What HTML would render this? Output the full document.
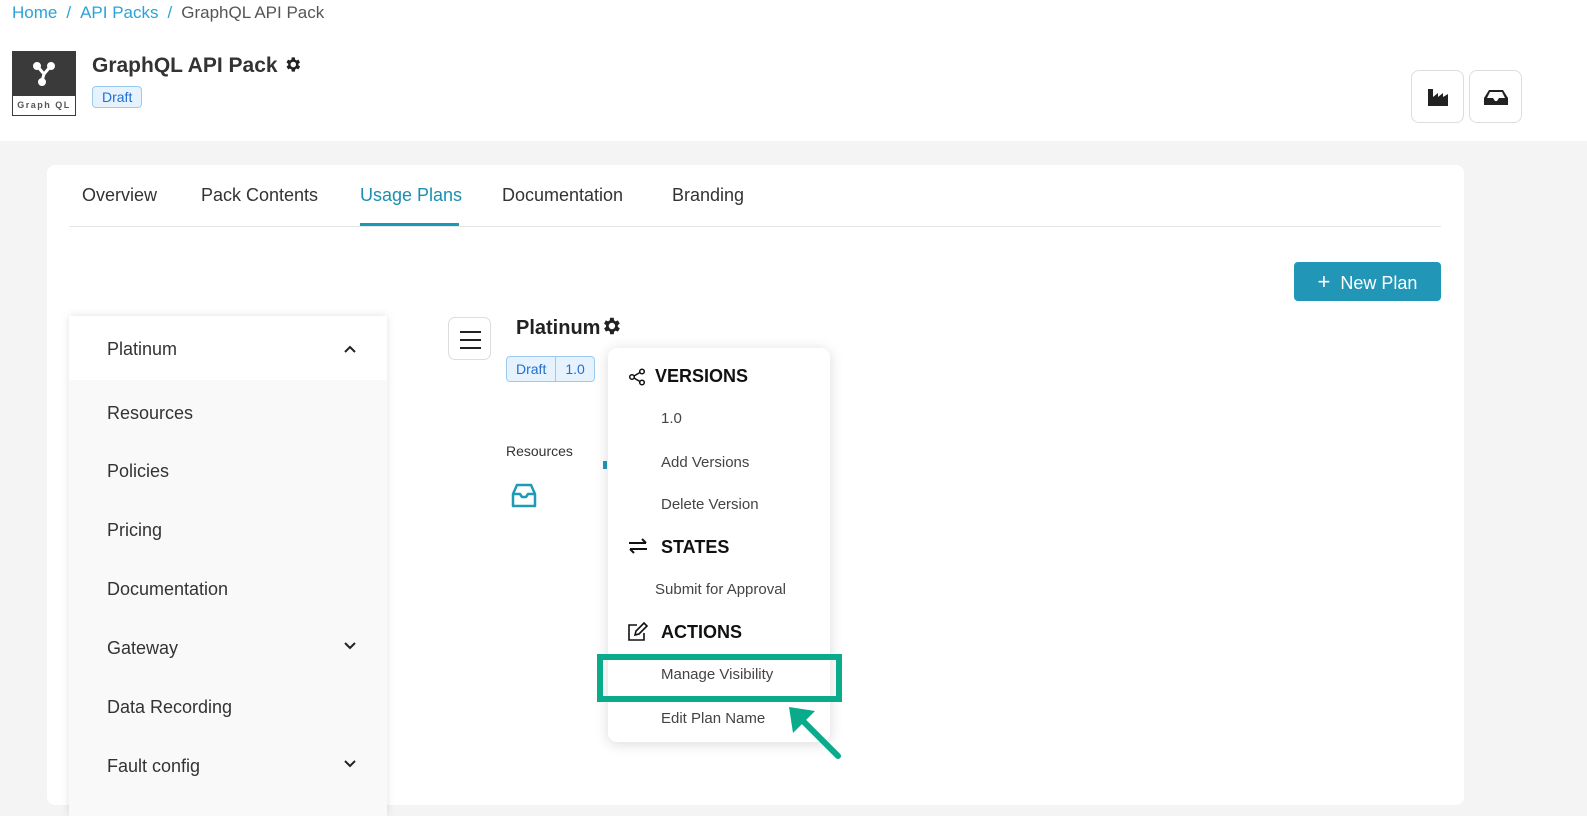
<!DOCTYPE html>
<html><head><meta charset="utf-8"><style>
*{box-sizing:border-box;margin:0;padding:0}
body{width:1587px;height:793px;overflow:hidden;background:#f4f4f4;font-family:"Liberation Sans",sans-serif;color:#333;position:relative}
.abs{position:absolute}
.top{left:0;top:0;width:1587px;height:141px;background:#fff}
.bc{left:12px;top:3px;font-size:17px;color:#555}
.bc a{color:#2aa3d8;text-decoration:none}
.bc span{margin:0 9px;color:#2aa3d8}
.logo{left:12px;top:51px;width:64px;height:65px;background:#3a3a3a}
.logo .lb{position:absolute;left:1px;right:1px;bottom:1px;height:19px;background:#fff;font-size:9px;letter-spacing:1.5px;color:#555;text-align:center;line-height:19px;font-weight:bold}
.title{left:92px;top:54px;font-size:21px;font-weight:bold;color:#333}
.badge{background:#e6f3ff;border:1px solid #9cc9f0;color:#1f6fd0;border-radius:4px;font-size:14px;padding:2px 9px}
.ib{width:53px;height:53px;border:1px solid #ddd;border-radius:8px;background:#fff;display:flex;align-items:center;justify-content:center}
.card{left:47px;top:165px;width:1417px;height:640px;background:#fff;border-radius:8px}
.tab{top:185px;font-size:18px;color:#333}
.line{left:69px;top:226px;width:1372px;height:1px;background:#e6e6e6}
.btn{left:1294px;top:262px;width:147px;height:39px;background:#2196b6;border-radius:4px;color:#fff;font-size:18px;line-height:39px;text-align:center}
.side{left:69px;top:316px;width:318px;height:500px;background:#f9f9f9;box-shadow:0 0 8px rgba(0,0,0,.12)}
.si{position:absolute;left:38px;font-size:18px;color:#333}
.menu{left:608px;top:348px;width:222px;height:394px;background:#fff;border-radius:9px;box-shadow:0 2px 14px rgba(0,0,0,.15)}
.mh{position:absolute;font-size:18px;font-weight:bold;color:#111}
.mi{position:absolute;font-size:15px;color:#444}
</style></head><body>
<div class="abs top"></div>
<div class="abs bc"><a>Home</a><span>/</span><a>API Packs</a><span>/</span>GraphQL API Pack</div>
<div class="abs logo"><svg width="64" height="44" viewBox="0 0 64 44"><g stroke="#fff" stroke-width="3" fill="#fff"><line x1="32" y1="23" x2="26" y2="16"/><line x1="32" y1="23" x2="38" y2="16"/><line x1="32" y1="23" x2="30" y2="30"/><circle cx="25" cy="15" r="2.5"/><circle cx="39" cy="15" r="2.5"/><circle cx="30" cy="31" r="2.5"/></g></svg><div class="lb">Graph QL</div></div>
<div class="abs title">GraphQL API Pack <svg width="19" height="19" viewBox="0 0 24 24" style="vertical-align:-2px"><path fill="#222" d="M19.4 13a7.5 7.5 0 000-2l2.1-1.6-2-3.5-2.5 1a7 7 0 00-1.7-1L15 3h-4l-.4 2.9a7 7 0 00-1.7 1l-2.5-1-2 3.5L6.6 11a7.5 7.5 0 000 2l-2.1 1.6 2 3.5 2.5-1a7 7 0 001.7 1L11 21h4l.4-2.9a7 7 0 001.7-1l2.5 1 2-3.5zM13 15.5a3.5 3.5 0 110-7 3.5 3.5 0 010 7z"/></svg></div>
<div class="abs badge" style="left:92px;top:86px">Draft</div>
<div class="abs ib" style="left:1411px;top:70px"><svg width="22" height="20" viewBox="0 0 22 20"><path fill="#222" d="M1 2h5v8l5-4v4l5-4v4l5-3v12H1z"/></svg></div>
<div class="abs ib" style="left:1469px;top:70px"><svg width="26" height="20" viewBox="0 0 26 20"><path fill="#222" d="M6 3h14l5 8v7H1v-7zM7 5l-3 6h6l2 3h2l2-3h6l-3-6z"/></svg></div>
<div class="abs card"></div>
<div class="abs tab" style="left:82px">Overview</div>
<div class="abs tab" style="left:201px">Pack Contents</div>
<div class="abs tab" style="left:360px;color:#1a8fb0">Usage Plans</div>
<div class="abs" style="left:360px;top:223px;width:99px;height:3px;background:#1a9bb5"></div>
<div class="abs tab" style="left:502px">Documentation</div>
<div class="abs tab" style="left:672px">Branding</div>
<div class="abs line"></div>
<div class="abs btn"><span style="font-size:22px;margin-right:10px">+</span>New Plan</div>
<div class="abs side">
<div style="position:absolute;left:0;top:0;width:318px;height:64px;background:#fff"></div>
<div class="si" style="top:23px">Platinum</div>
<svg style="position:absolute;left:274px;top:28px" width="14" height="10"><path d="M2 8l5-5 5 5" stroke="#222" stroke-width="2" fill="none"/></svg>
<div class="si" style="top:87px">Resources</div>
<div class="si" style="top:145px">Policies</div>
<div class="si" style="top:204px">Pricing</div>
<div class="si" style="top:263px">Documentation</div>
<div class="si" style="top:322px">Gateway</div>
<svg style="position:absolute;left:274px;top:325px" width="14" height="10"><path d="M2 2l5 5 5-5" stroke="#222" stroke-width="2" fill="none"/></svg>
<div class="si" style="top:381px">Data Recording</div>
<div class="si" style="top:440px">Fault config</div>
<svg style="position:absolute;left:274px;top:443px" width="14" height="10"><path d="M2 2l5 5 5-5" stroke="#222" stroke-width="2" fill="none"/></svg>
</div>
<div class="abs" style="left:448px;top:317px;width:43px;height:43px;border:1px solid #ddd;border-radius:7px;background:#fff"><svg width="43" height="43"><path d="M11 14h21M11 22h21M11 30h21" stroke="#222" stroke-width="2"/></svg></div>
<div class="abs" style="left:516px;top:315px;font-size:20px;font-weight:bold;color:#222">Platinum<svg width="22" height="22" viewBox="0 0 24 24" style="vertical-align:-3px"><path fill="#222" d="M19.4 13a7.5 7.5 0 000-2l2.1-1.6-2-3.5-2.5 1a7 7 0 00-1.7-1L15 3h-4l-.4 2.9a7 7 0 00-1.7 1l-2.5-1-2 3.5L6.6 11a7.5 7.5 0 000 2l-2.1 1.6 2 3.5 2.5-1a7 7 0 001.7 1L11 21h4l.4-2.9a7 7 0 001.7-1l2.5 1 2-3.5zM13 15.5a3.5 3.5 0 110-7 3.5 3.5 0 010 7z"/></svg></div>
<div class="abs" style="left:506px;top:356px;display:flex;font-size:14px;color:#1f6fd0"><div style="background:#e6f3ff;border:1px solid #9cc9f0;border-radius:4px 0 0 4px;padding:4px 9px">Draft</div><div style="background:#e6f3ff;border:1px solid #9cc9f0;border-left:none;border-radius:0 4px 4px 0;padding:4px 9px">1.0</div></div>
<div class="abs" style="left:506px;top:443px;font-size:14px;color:#333">Resources</div>
<svg class="abs" style="left:510px;top:482px" width="28" height="28" viewBox="0 0 28 28"><path d="M3 12l4-9h14l4 9v12H3zM3 12h7l2 3h4l2-3h7" stroke="#1e9ab8" stroke-width="2.5" fill="none" stroke-linejoin="round"/></svg>
<div class="abs" style="left:603px;top:461px;width:4px;height:8px;background:#1e9ab8"></div>
<div class="abs menu">
<svg style="position:absolute;left:20px;top:20px" width="18" height="18" viewBox="0 0 18 18"><g stroke="#111" stroke-width="1.5" fill="none"><circle cx="4" cy="9" r="2.3"/><circle cx="14" cy="3.5" r="2.3"/><circle cx="14" cy="14.5" r="2.3"/><path d="M6 8l6-3.5M6 10l6 3.5"/></g></svg>
<div class="mh" style="left:47px;top:18px">VERSIONS</div>
<div class="mi" style="left:53px;top:62px">1.0</div>
<div class="mi" style="left:53px;top:106px">Add Versions</div>
<div class="mi" style="left:53px;top:148px">Delete Version</div>
<svg style="position:absolute;left:20px;top:190px" width="20" height="16"><g stroke="#111" stroke-width="2" fill="none"><path d="M1 5h17M14 1l4 4M19 11H2M6 15l-4-4"/></g></svg>
<div class="mh" style="left:53px;top:189px">STATES</div>
<div class="mi" style="left:47px;top:233px">Submit for Approval</div>
<svg style="position:absolute;left:19px;top:274px" width="22" height="20" viewBox="0 0 22 20"><g stroke="#111" stroke-width="1.6" fill="none"><path d="M10 3H2v15h15v-7"/><path d="M8 13l1-4 8-8 3 3-8 8z"/></g></svg>
<div class="mh" style="left:53px;top:274px">ACTIONS</div>
<div class="mi" style="left:53px;top:318px">Manage Visibility</div>
<div class="mi" style="left:53px;top:362px">Edit Plan Name</div>
</div>
<div class="abs" style="left:597px;top:654px;width:245px;height:48px;border:6px solid #0aab8a"></div>
<svg class="abs" style="left:780px;top:698px" width="70" height="70"><path d="M58 58L15 15" stroke="#0aab8a" stroke-width="6" stroke-linecap="round"/><path d="M9 9l26 4-22 22z" fill="#0aab8a"/></svg>
</body></html>
